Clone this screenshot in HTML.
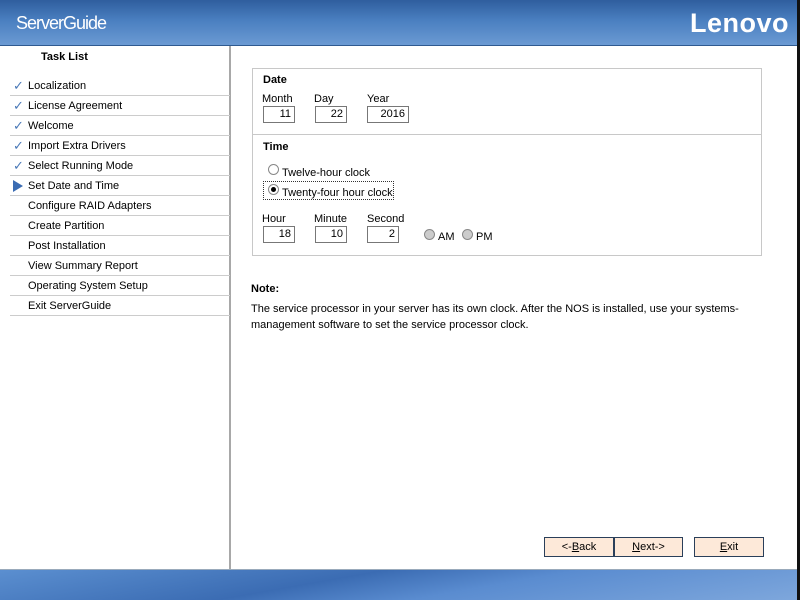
<!DOCTYPE html>
<html><head><style>
*{margin:0;padding:0;box-sizing:border-box}
body{width:800px;height:600px;position:relative;overflow:hidden;background:#fff;font-family:"Liberation Sans","DejaVu Sans",sans-serif;font-size:11px;color:#000}
.hdr{position:absolute;left:0;top:0;width:800px;height:46px;background:linear-gradient(180deg,#2f5e9e 0%,#4a7fc0 45%,#6b9ad3 100%);border-bottom:1px solid #2f5a90}
.hdr .t{position:absolute;left:16px;top:13px;color:#fff;font-size:18px;letter-spacing:-1px}
.hdr .l{position:absolute;left:690px;top:8px;color:#fff;font-size:27px;font-weight:bold;letter-spacing:0.5px}
.ftr{position:absolute;left:0;top:569px;width:800px;height:31px;background:linear-gradient(170deg,#5b8fd0 0%,#3b6cb3 40%,#5a8cd0 60%,#7ea7dc 100%);border-top:1px solid #9ab}
.side{position:absolute;left:0;top:46px;width:231px;height:523px;border-right:2px solid #a8a8a8}
.side h3{position:absolute;left:41px;top:5px;font-size:11px;font-weight:bold}
.item{position:absolute;left:10px;width:220px;height:20px;border-bottom:1px solid #ccc;padding-left:18px;line-height:20px}
.ck{position:absolute;left:3px;top:0;color:#4a79b8;font-size:13px;font-weight:bold}
.ar{position:absolute;left:3px;top:4px;width:0;height:0;border-left:10px solid #3b6cb3;border-top:6px solid transparent;border-bottom:6px solid transparent}
.box{position:absolute;left:252px;width:510px;border:1px solid #c8c8c8}
.lbl{position:absolute}
.b{font-weight:bold}
.in{position:absolute;height:17px;border:1px solid #777;text-align:right;padding-right:3px;line-height:15px;width:32px}
.rad{position:absolute;width:11px;height:11px;border-radius:50%;border:1px solid #888;background:#fff}
.btn{position:absolute;top:537px;height:20px;background:#fde9d9;border:1px solid #2a3f5a;text-align:center;line-height:18px}
u{text-decoration:underline}
</style></head><body>
<div class="hdr"><div class="t">ServerGuide</div><div class="l">Lenovo</div></div>
<div class="side">
<h3>Task List</h3>
<div class="item" style="top:30px"><span class="ck">✓</span>Localization</div>
<div class="item" style="top:50px"><span class="ck">✓</span>License Agreement</div>
<div class="item" style="top:70px"><span class="ck">✓</span>Welcome</div>
<div class="item" style="top:90px"><span class="ck">✓</span>Import Extra Drivers</div>
<div class="item" style="top:110px"><span class="ck">✓</span>Select Running Mode</div>
<div class="item" style="top:130px"><span class="ar"></span>Set Date and Time</div>
<div class="item" style="top:150px">Configure RAID Adapters</div>
<div class="item" style="top:170px">Create Partition</div>
<div class="item" style="top:190px">Post Installation</div>
<div class="item" style="top:210px">View Summary Report</div>
<div class="item" style="top:230px">Operating System Setup</div>
<div class="item" style="top:250px">Exit ServerGuide</div>
</div>
<div class="box" style="top:68px;height:67px"></div>
<div class="box" style="top:134px;height:122px"></div>
<div class="lbl b" style="left:263px;top:74px">Date</div>
<div class="lbl" style="left:262px;top:93px">Month</div>
<div class="lbl" style="left:314px;top:93px">Day</div>
<div class="lbl" style="left:367px;top:93px">Year</div>
<div class="in" style="left:263px;top:106px">11</div>
<div class="in" style="left:315px;top:106px">22</div>
<div class="in" style="left:367px;top:106px;width:42px">2016</div>
<div class="lbl b" style="left:263px;top:141px">Time</div>
<div class="rad" style="left:268px;top:164px"></div>
<div class="lbl" style="left:282px;top:167px">Twelve-hour clock</div>
<div style="position:absolute;left:263px;top:181px;width:131px;height:19px;border:1px dotted #333"></div>
<div class="rad" style="left:268px;top:184px"><div style="width:5px;height:5px;border-radius:50%;background:#000;margin:2px"></div></div>
<div class="lbl" style="left:282px;top:187px">Twenty-four hour clock</div>
<div class="lbl" style="left:262px;top:213px">Hour</div>
<div class="lbl" style="left:314px;top:213px">Minute</div>
<div class="lbl" style="left:367px;top:213px">Second</div>
<div class="in" style="left:263px;top:226px">18</div>
<div class="in" style="left:315px;top:226px">10</div>
<div class="in" style="left:367px;top:226px">2</div>
<div class="rad" style="left:424px;top:229px;background:#ccc"></div>
<div class="lbl" style="left:438px;top:231px">AM</div>
<div class="rad" style="left:462px;top:229px;background:#ccc"></div>
<div class="lbl" style="left:476px;top:231px">PM</div>
<div class="lbl b" style="left:251px;top:283px">Note:</div>
<div class="lbl" style="left:251px;top:301px;width:490px;line-height:16px">The service processor in your server has its own clock. After the NOS is installed, use your systems-management software to set the service processor clock.</div>
<div class="btn" style="left:544px;width:70px">&lt;-<u>B</u>ack</div>
<div class="btn" style="left:614px;width:69px"><u>N</u>ext-&gt;</div>
<div class="btn" style="left:694px;width:70px"><u>E</u>xit</div>
<div class="ftr"></div>
<div style="position:absolute;right:0;top:0;width:3px;height:600px;background:#111"></div>
</body></html>
